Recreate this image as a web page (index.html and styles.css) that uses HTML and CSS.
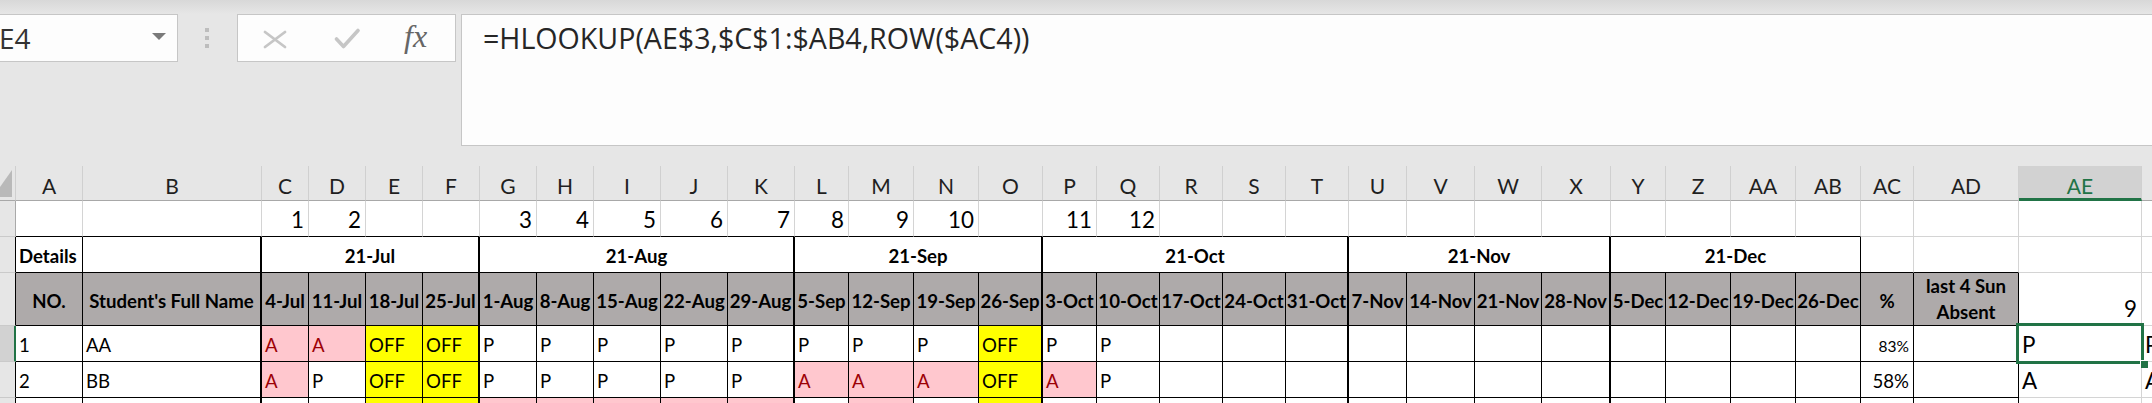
FILE: index.html
```html
<!DOCTYPE html>
<html>
<head>
<meta charset="utf-8">
<title>Attendance sheet</title>
<link rel="stylesheet" href="styles.css">
</head>
<body>
<div class="fbar">
  <div class="namebox"><span>E4</span><svg class="dd" width="14" height="7" viewBox="0 0 14 7"><polygon points="0,0 14,0 7,7" fill="#7a7a7a"/></svg></div>
  <div class="grip"><i></i><i></i><i></i></div>
  <div class="fxbox">
    <svg class="ico-x" width="24" height="19" viewBox="0 0 24 19"><path d="M2 2 L22 17 M22 2 L2 17" stroke="#c6c6c6" stroke-width="2.8" stroke-linecap="round" fill="none"/></svg>
    <svg class="ico-ok" width="26" height="21" viewBox="0 0 26 21"><polyline points="2.5,11 9.5,18.5 24,2.5" stroke="#c6c6c6" stroke-width="3.6" stroke-linecap="round" stroke-linejoin="round" fill="none"/></svg>
    <span class="fx">fx</span>
  </div>
  <div class="formula">=HLOOKUP(AE$3,$C$1:$AB4,ROW($AC4))</div>
</div>

<div class="sheet">
  <!-- column headers -->
  <div class="rh corner"><i class="tri"></i></div>
  <div class="h">A</div><div class="h">B</div><div class="h">C</div><div class="h">D</div><div class="h">E</div><div class="h">F</div><div class="h">G</div><div class="h">H</div><div class="h">I</div><div class="h">J</div><div class="h">K</div><div class="h">L</div><div class="h">M</div><div class="h">N</div><div class="h">O</div><div class="h">P</div><div class="h">Q</div><div class="h">R</div><div class="h">S</div><div class="h">T</div><div class="h">U</div><div class="h">V</div><div class="h">W</div><div class="h">X</div><div class="h">Y</div><div class="h">Z</div><div class="h">AA</div><div class="h">AB</div><div class="h">AC</div><div class="h">AD</div><div class="h sel">AE</div><div class="h"></div>

  <!-- row 1 -->
  <div class="rh"></div>
  <div class="c kb"></div><div class="c kb"></div>
  <div class="c kb lg n">1</div><div class="c kb lg n">2</div><div class="c kb"></div><div class="c kb"></div>
  <div class="c kb lg n">3</div><div class="c kb lg n">4</div><div class="c kb lg n">5</div><div class="c kb lg n">6</div><div class="c kb lg n">7</div>
  <div class="c kb lg n">8</div><div class="c kb lg n">9</div><div class="c kb lg n">10</div><div class="c kb"></div>
  <div class="c kb lg n">11</div><div class="c kb lg n">12</div><div class="c kb"></div><div class="c kb"></div><div class="c kb"></div>
  <div class="c kb"></div><div class="c kb"></div><div class="c kb"></div><div class="c kb"></div>
  <div class="c kb"></div><div class="c kb"></div><div class="c kb"></div><div class="c kb"></div>
  <div class="c"></div><div class="c"></div><div class="c"></div><div class="c"></div>

  <!-- row 2 -->
  <div class="rh rk"></div>
  <div class="c k b">Details</div>
  <div class="c k kt"></div>
  <div class="c k kt b ctr s4">21-Jul</div>
  <div class="c k kt b ctr s5">21-Aug</div>
  <div class="c k kt b ctr s4">21-Sep</div>
  <div class="c k kt b ctr s5">21-Oct</div>
  <div class="c k kt b ctr s4">21-Nov</div>
  <div class="c k b ctr s4">21-Dec</div>
  <div class="c kb"></div><div class="c kb"></div><div class="c"></div><div class="c"></div>

  <!-- row 3 -->
  <div class="rh rk"></div>
  <div class="c k g">NO.</div>
  <div class="c k kt g">Student's Full Name</div>
  <div class="c k g">4-Jul</div><div class="c k g">11-Jul</div><div class="c k g">18-Jul</div><div class="c k kt g">25-Jul</div>
  <div class="c k g">1-Aug</div><div class="c k g">8-Aug</div><div class="c k g">15-Aug</div><div class="c k g">22-Aug</div><div class="c k kt g">29-Aug</div>
  <div class="c k g">5-Sep</div><div class="c k g">12-Sep</div><div class="c k g">19-Sep</div><div class="c k kt g">26-Sep</div>
  <div class="c k g">3-Oct</div><div class="c k g">10-Oct</div><div class="c k g">17-Oct</div><div class="c k g">24-Oct</div><div class="c k kt g">31-Oct</div>
  <div class="c k g">7-Nov</div><div class="c k g">14-Nov</div><div class="c k g">21-Nov</div><div class="c k kt g">28-Nov</div>
  <div class="c k g">5-Dec</div><div class="c k g">12-Dec</div><div class="c k g">19-Dec</div><div class="c k g">26-Dec</div>
  <div class="c k g">%</div>
  <div class="c k g wrap">last 4 Sun Absent</div>
  <div class="c lg n">9</div>
  <div class="c"></div>

  <!-- row 4 -->
  <div class="rh rk act"></div>
  <div class="c k">1</div>
  <div class="c k kt">AA</div>
  <div class="c k pk">A</div><div class="c k pk">A</div><div class="c k yl">OFF</div><div class="c k kt yl">OFF</div>
  <div class="c k">P</div><div class="c k">P</div><div class="c k">P</div><div class="c k">P</div><div class="c k kt">P</div>
  <div class="c k">P</div><div class="c k">P</div><div class="c k">P</div><div class="c k kt yl">OFF</div>
  <div class="c k">P</div><div class="c k">P</div><div class="c k"></div><div class="c k"></div><div class="c k kt"></div>
  <div class="c k"></div><div class="c k"></div><div class="c k"></div><div class="c k kt"></div>
  <div class="c k"></div><div class="c k"></div><div class="c k"></div><div class="c k"></div>
  <div class="c k pc sm">83%</div>
  <div class="c k"></div>
  <div class="c lg active">P<i class="selbox"><b class="handle"></b></i></div>
  <div class="c lg">P</div>

  <!-- row 5 -->
  <div class="rh rk"></div>
  <div class="c k">2</div>
  <div class="c k kt">BB</div>
  <div class="c k pk">A</div><div class="c k">P</div><div class="c k yl">OFF</div><div class="c k kt yl">OFF</div>
  <div class="c k">P</div><div class="c k">P</div><div class="c k">P</div><div class="c k">P</div><div class="c k kt">P</div>
  <div class="c k pk">A</div><div class="c k pk">A</div><div class="c k pk">A</div><div class="c k kt yl">OFF</div>
  <div class="c k pk">A</div><div class="c k">P</div><div class="c k"></div><div class="c k"></div><div class="c k kt"></div>
  <div class="c k"></div><div class="c k"></div><div class="c k"></div><div class="c k kt"></div>
  <div class="c k"></div><div class="c k"></div><div class="c k"></div><div class="c k"></div>
  <div class="c k pc">58%</div>
  <div class="c k"></div>
  <div class="c lg">A</div>
  <div class="c lg">A</div>

  <!-- row 6 -->
  <div class="rh rk"></div>
  <div class="c k"></div>
  <div class="c k kt"></div>
  <div class="c k"></div><div class="c k"></div><div class="c k yl"></div><div class="c k kt yl"></div>
  <div class="c k pk"></div><div class="c k pk"></div><div class="c k pk"></div><div class="c k pk"></div><div class="c k kt pk"></div>
  <div class="c k"></div><div class="c k pk"></div><div class="c k"></div><div class="c k kt yl"></div>
  <div class="c k"></div><div class="c k"></div><div class="c k"></div><div class="c k"></div><div class="c k kt"></div>
  <div class="c k"></div><div class="c k"></div><div class="c k"></div><div class="c k kt"></div>
  <div class="c k"></div><div class="c k"></div><div class="c k"></div><div class="c k"></div>
  <div class="c k"></div>
  <div class="c k"></div>
  <div class="c"></div>
  <div class="c"></div>
</div>
</body>
</html>
```

FILE: styles.css
```css
* { box-sizing: border-box; }
html, body { margin: 0; padding: 0; }
body {
  width: 2152px;
  height: 403px;
  overflow: hidden;
  background: #e6e6e6;
  font-family: Lato, "Liberation Sans", sans-serif;
}

/* ---------- formula bar ---------- */
.fbar {
  display: flex;
  align-items: flex-start;
  height: 166px;
  padding-top: 14px;
  background: linear-gradient(#d8d8d8, #e6e6e6 14px);
}
.namebox {
  flex: none;
  width: 181px;
  height: 48px;
  margin-left: -3px;
  border: 1px solid #c6c6c6;
  background: #fdfdfd;
  display: flex;
  align-items: center;
  justify-content: space-between;
  padding-left: 1px;
  padding-right: 11px;
  font-family: "Open Sans", sans-serif;
  font-size: 28px;
  line-height: 28px;
  color: #333;
}
.dd { margin-bottom: 3px; }
.grip {
  flex: none;
  margin-left: 27px;
  margin-top: 14px;
  display: flex;
  flex-direction: column;
  gap: 4px;
}
.grip i { display: block; width: 4px; height: 4px; background: #bdbdbd; }
.fxbox {
  flex: none;
  margin-left: 28px;
  width: 219px;
  height: 48px;
  border: 1px solid #c6c6c6;
  background: #fdfdfd;
  display: flex;
  align-items: flex-start;
}
.ico-x { flex: none; margin-left: 25px; margin-top: 15px; }
.ico-ok { flex: none; margin-left: 47px; margin-top: 13px; }
.fx {
  margin-left: 44px;
  margin-top: 5px;
  font-family: "Liberation Serif", serif;
  font-style: italic;
  font-size: 32px;
  line-height: 32px;
  color: #666;
}
.formula {
  flex: 1;
  margin-left: 5px;
  height: 132px;
  border: 1px solid #c6c6c6;
  border-right: 0;
  background: #fdfdfd;
  padding: 9px 0 0 21px;
  font-family: "Open Sans", sans-serif;
  font-size: 28.6px;
  line-height: 28px;
  color: #262626;
  white-space: nowrap;
}

/* ---------- sheet grid ---------- */
.sheet {
  display: grid;
  width: 2182px;
  grid-template-columns: 16px 67px 179px 47px 57px 57px 57px 57px 57px 67px 67px 67px 54px 65px 65px 64px 54px 63px 63px 63px 63px 58px 68px 67px 69px 55px 65px 65px 65px 53px 105px 123px 40px;
  grid-template-rows: 35px 36px 36px 53px 36px 36px 36px;
}

.rh {
  background: #e6e6e6;
  border-right: 1px solid #a9a9a9;
  border-bottom: 1px solid #cacaca;
}
.rh.rk { border-right-color: #000; }
.rh.act { background: #d2d2d2; border-right: 2px solid #217346; }
.corner {
  display: flex;
  align-items: flex-end;
  padding-bottom: 3px;
  border-bottom-color: #a8a8a8;
  border-right-color: #cfcfcf;
}
.tri {
  display: block;
  width: 12px;
  height: 27px;
  background: #b9b9b9;
  clip-path: polygon(100% 0, 100% 100%, 0 100%, 0 63%);
}

.h {
  display: flex;
  align-items: center;
  justify-content: center;
  padding-top: 4px;
  background: #e6e6e6;
  border-right: 1px solid #d0d0d0;
  border-bottom: 1px solid #a8a8a8;
  font-size: 21px;
  color: #1f1f1f;
  white-space: nowrap;
  overflow: hidden;
}
.h.sel {
  background: #d2d2d2;
  color: #217346;
  border-bottom: 3px solid #217346;
  padding-top: 6px;
}

.c {
  display: flex;
  align-items: flex-end;
  min-width: 0;
  padding: 0 3px 6px;
  background: #fff;
  border-right: 1px solid #d4d4d4;
  border-bottom: 1px solid #d4d4d4;
  font-size: 18.6px;
  line-height: 20px;
  color: #000;
  white-space: nowrap;
  overflow: hidden;
}
.k { border-right-color: #000; border-bottom-color: #000; }
.kb { border-bottom-color: #000; }
.kt { border-right: 2px solid #000; }

.b { font-weight: 700; }
.ctr { justify-content: center; }
.s4 { grid-column: span 4; }
.s5 { grid-column: span 5; }

.g {
  background: #aeaaaa;
  font-weight: 700;
  align-items: center;
  justify-content: center;
  padding: 3px 1px 0;
}
.wrap {
  white-space: normal;
  text-align: center;
  line-height: 26px;
  padding: 0 2px;
}

.lg { font-size: 22.4px; line-height: 24px; padding-bottom: 4px; }
.n { justify-content: flex-end; padding-right: 4px; }
.pc { justify-content: flex-end; padding-right: 4px; }
.sm { font-size: 15.5px; line-height: 16px; padding-bottom: 7px; }

.pk { background: #ffc7ce; color: #9c0006; }
.yl { background: #ffff00; }

.active { position: relative; overflow: visible; }
.selbox {
  position: absolute;
  left: -3px;
  top: -3px;
  right: -3px;
  bottom: -3px;
  border: 3px solid #217346;
  z-index: 2;
}
.handle {
  position: absolute;
  right: -7px;
  bottom: -7px;
  width: 8px;
  height: 8px;
  background: #217346;
  border-left: 1px solid #fff;
  border-top: 1px solid #fff;
}
```
